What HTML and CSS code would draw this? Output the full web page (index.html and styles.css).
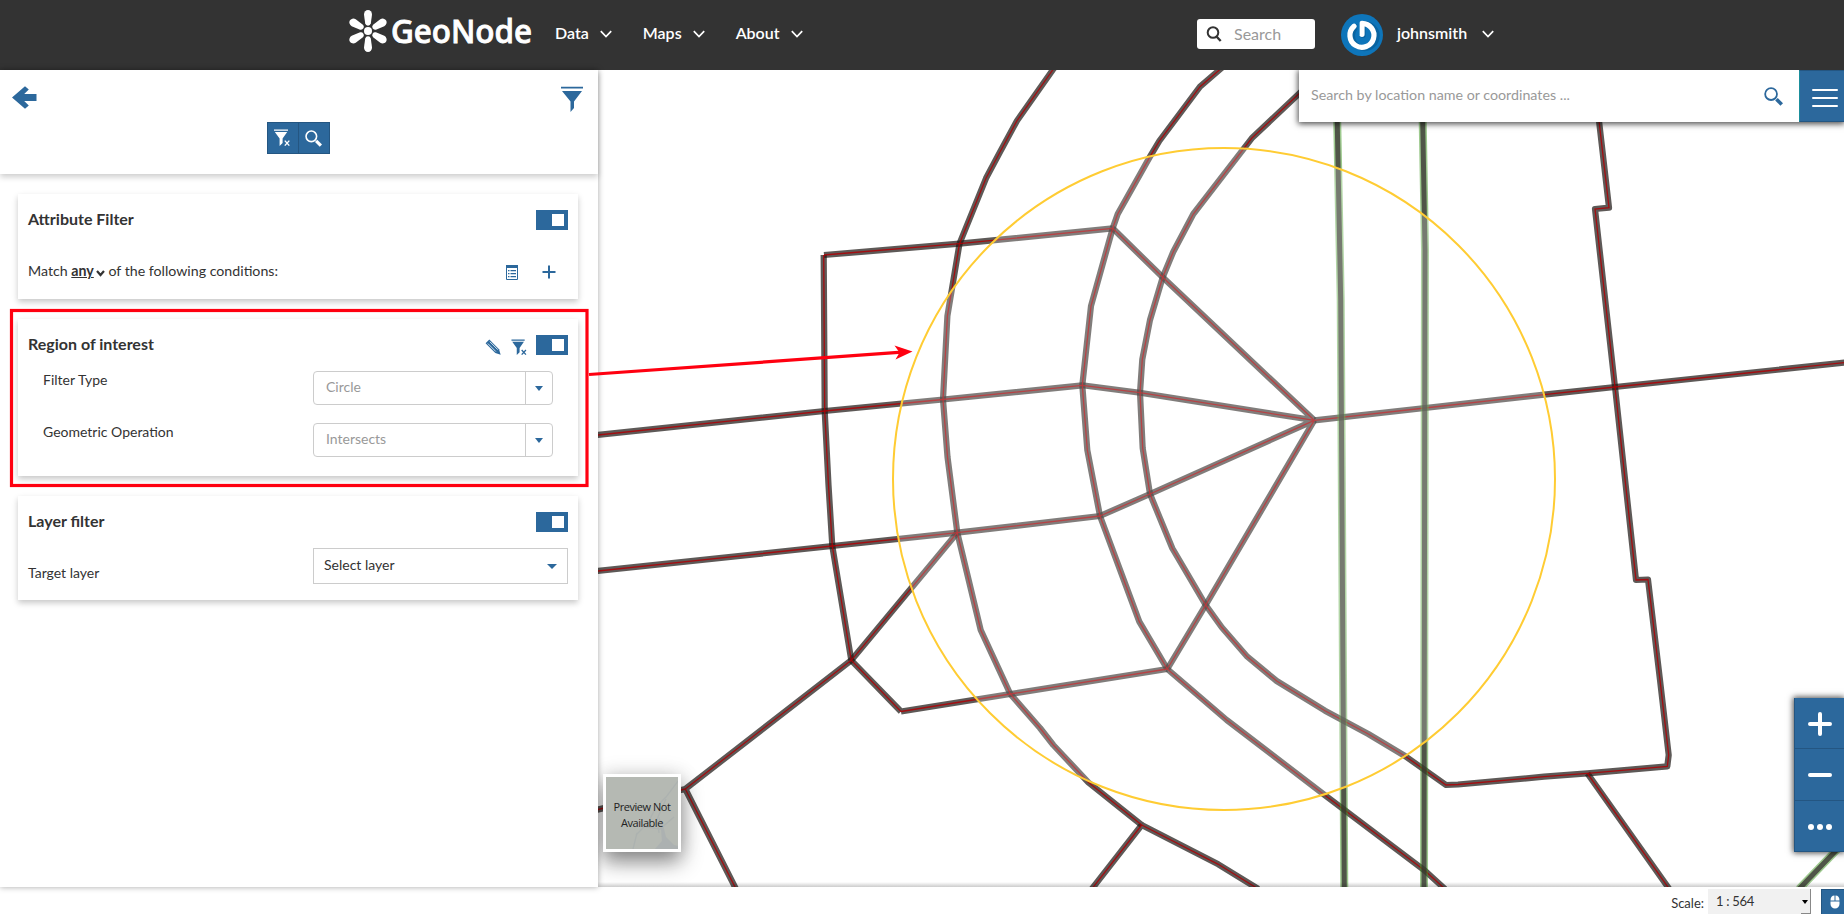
FILE: index.html
```html
<!DOCTYPE html>
<html lang="en">
<head>
<meta charset="utf-8">
<title>GeoNode</title>
<link rel="stylesheet" href="styles.css">
</head>
<body>
<svg class="defs" width="0" height="0">
  <symbol id="chev" viewBox="0 0 12 8"><path d="M.8 1.2 6 6.6l5.200-5.400" fill="none" stroke="currentColor" stroke-width="1.700"/></symbol>
  <symbol id="funnel" viewBox="0 0 22 26"><path d="M0 .8h22v1.800H0zM1 5h20L13 15.500V22l-3.500 4V15.500z" fill="currentColor"/></symbol>
  <symbol id="funnelx" viewBox="0 0 17 18"><path d="M0 .5h14v1.300H0zM.8 3h12.400L8.600 9.500V14L5.600 17V9.500z" fill="currentColor"/><path d="m10.800 11.600 4.500 5M15.300 11.600l-4.500 5" stroke="currentColor" stroke-width="1.400"/></symbol>
  <symbol id="glass" viewBox="0 0 18 18"><circle cx="6.700" cy="6.700" r="5.600" fill="none" stroke="currentColor" stroke-width="1.700"/><path d="m11.800 11.600 5 5" stroke="currentColor" stroke-width="3.400"/></symbol>
</svg>
<header class="topbar">
  <svg class="logo" width="190" height="56" viewBox="0 0 190 56">
    <g fill="#fff">
      <circle cx="20" cy="25" r="4"/>
      <g id="petals">
        <path id="petal" d="M16 8.500a4 4.500 0 0 1 8 0L22.800 17.500a2.900 2.900 0 0 1-5.600 0z"/>
        <use href="#petal" transform="rotate(60 20 25)"/><use href="#petal" transform="rotate(120 20 25)"/>
        <use href="#petal" transform="rotate(180 20 25)"/><use href="#petal" transform="rotate(240 20 25)"/>
        <use href="#petal" transform="rotate(300 20 25)"/>
      </g>
      <text class="logo-text" x="43" y="37" textLength="141" lengthAdjust="spacingAndGlyphs">GeoNode</text>
    </g>
  </svg>
  <nav class="nav">
    <a>Data<svg class="chev"><use href="#chev"/></svg></a>
    <a>Maps<svg class="chev"><use href="#chev"/></svg></a>
    <a>About<svg class="chev"><use href="#chev"/></svg></a>
  </nav>
  <div class="site-search">
    <svg width="16" height="16" viewBox="0 0 16 16" fill="none" stroke="#333"><circle cx="7" cy="6.500" r="5.300" stroke-width="2"/><path d="m10.500 10.500 4.200 4.500" stroke-width="2.400"/></svg>
    <span>Search</span>
  </div>
  <div class="user">
    <svg width="42" height="42" viewBox="0 0 42 42"><circle cx="21" cy="21" r="21" fill="#0e75ba"/><path d="M14.500 11.800A12.300 12.300 0 1 0 21 8.800v11.500" transform="translate(1 1)" fill="none" stroke="#07558c" stroke-opacity=".55" stroke-width="5.500" stroke-linecap="round"/><path d="M13 12.300A12 12 0 1 0 21 9.300v11" fill="none" stroke="#fff" stroke-width="5.200" stroke-linecap="round" stroke-linejoin="round"/><path d="M17.400 8v13" stroke="#0e75ba" stroke-width="2"/></svg>
    <span>johnsmith</span><svg class="chev"><use href="#chev"/></svg>
  </div>
</header>

<main class="main">
  <aside class="panel">
    <div class="panel-head">
      <div class="panel-icons">
        <svg width="25" height="23" viewBox="0 0 25 23"><path d="M24.500 8H12.200l4.600-4.400L13 .2 0 11.500l13 11.300 3.800-3.400-4.600-4.400h12.300z" fill="#2c689c"/></svg>
        <svg class="funnel" width="22" height="26"><use href="#funnel"/></svg>
      </div>
      <div class="btns">
        <button><svg width="17" height="18"><use href="#funnelx"/></svg></button>
        <button><svg width="17" height="17"><use href="#glass"/></svg></button>
      </div>
    </div>
    <section class="card attr">
      <div class="row"><h2>Attribute Filter</h2><i class="toggle"></i></div>
      <div class="row match"><span class="txt">Match <b>any</b><svg width="9" height="7" viewBox="0 0 9 7"><path d="m1 1 3.500 4L8 1" fill="none" stroke="#333" stroke-width="2.200"/></svg> of the following conditions:</span>
        <svg class="list" width="12" height="15" viewBox="0 0 12 15"><path d="M.5.500h11v14H.5z" fill="none" stroke="#2c689c"/><path d="M0 0h12v3H0zM2 5h1.500v1.200H2zM4.500 5H10v1.200H4.500zM2 8h1.500v1.200H2zM4.500 8H10v1.200H4.500zM2 11h1.500v1.200H2zM4.500 11H10v1.200H4.500z" fill="#2c689c"/></svg>
        <svg class="plus" width="14" height="14" viewBox="0 0 14 14"><path d="M7 .5v13M.5 7h13" stroke="#2c689c" stroke-width="2"/></svg></div>
    </section>
    <section class="card region">
      <div class="row"><h2>Region of interest</h2>
        <svg class="pencil" width="16" height="16" viewBox="0 0 16 16"><path d="M4.300.600 14 10.300l1.700 5.400-5.400-1.700L.6 4.300z" fill="#2c689c"/><path d="m2.800 4.500 8 8M4.800 2.700l8 8" stroke="#fff" stroke-width=".8"/></svg>
        <svg class="fx" width="17" height="17"><use href="#funnelx"/></svg>
        <i class="toggle"></i></div>
      <div class="field"><label>Filter Type</label><div class="select"><span>Circle</span><em><i class="caret"></i></em></div></div>
      <div class="field"><label>Geometric Operation</label><div class="select"><span>Intersects</span><em><i class="caret"></i></em></div></div>
    </section>
    <section class="card layer">
      <div class="row"><h2>Layer filter</h2><i class="toggle"></i></div>
      <div class="target"><label>Target layer</label><div class="dropdown"><span>Select layer</span><i class="caret big"></i></div></div>
    </section>
  </aside>

  <div class="map">
    <svg class="roads" viewBox="598 70 1246 817">
      <defs>
        <g id="segs">
          <path d="M824 255 959.500 243.700 1112.700 228.300"/>
          <path d="M823.700 255 824.700 411M824.700 411 828.500 485 832.300 546M832.300 546 851.300 660.300"/>
          <path d="M1058 63 1052.700 70 1017 120.700 1000 152 986 178.300 959.500 243.700"/>
          <path d="M959.500 243.700 947.400 316 943 399.500M943 399.500 947.500 457 957.300 532.700M957.300 532.700 980.700 630 1010.300 694M1010.300 694 1040 728 1053.300 745 1088.300 782.300 1141.700 825"/>
          <path d="M1141.700 825 1218.300 864.300 1258.300 889M1141.700 825 1091 890"/>
          <path d="M1225 65 1219.300 70 1200 86.700 1159.300 141 1150 156.700 1117.700 214 1112.700 228.300"/>
          <path d="M1112.700 228.300 1091 306 1082.300 385.300M1082.300 385.300 1087.300 450 1100 516M1100 516 1139.300 621.700 1167.300 669M1167.300 669 1226.700 720 1323.300 794 1425 870.700 1445 889"/>
          <path d="M1320 74 1300 92.700 1251.700 138.300 1193.300 214 1173.300 251.700 1162.700 277.300M1162.700 277.300 1150 320 1142.300 359.300 1140 392.700M1140 392.700 1142.700 448.300 1150 494M1150 494 1172.300 548.300 1205.700 605M1205.700 605 1221.700 627.300 1247.300 656.700 1276.700 681 1325 710.700 1368.300 734 1405 756 1446 785 1458 784.500 1544 776.700 1587.300 773.300 1667.300 766.300 1668.700 755 1660 680 1648 579.500 1636 580 1615 387"/>
          <path d="M1615 387 1595 209 1609 207.700 1598 112M1587.500 773.500 1670 890"/>
          <path d="M1112.700 228.300 1162.700 277.300 1314.300 420.300M1082.300 385.300 1140 392.700 1314.300 420.300M1100 516 1150 494 1314.300 420.300M1167.300 669 1205.700 605 1314.300 420.300"/>
          <path d="M1314.300 420.300 1425 408 1544 394.700 1615 387M1615 387 1846 362.500"/>
          <path d="M596 435.200 824.700 411M824.700 411 943 399.500M943 399.500 1082.300 385.300"/>
          <path d="M596 571.200 832.300 546M832.300 546 957.300 532.700M957.300 532.700 1100 516"/>
          <path d="M957.300 532.700 851.300 660.300M851.300 660.300 685.300 789M685.300 789 736 889M685.300 789 596 810"/>
          <path d="M851.300 660.300 901 711.500M901 711.500 1010.300 694M1010.300 694 1167.300 669"/>
        </g>
        <path id="g1" d="M1337 110 1340.700 300 1341.800 480 1344.300 889"/>
        <path id="g2" d="M1422.500 110 1425 250 1424.600 480 1424 889"/>
        <path id="g3" d="M1799 889 1837 849.500 1846 841"/>
      </defs>
      <use href="#segs" class="casing"/>
      <use href="#segs" class="red"/>
      <g class="green"><use href="#g1"/><use href="#g2"/><use href="#g3"/></g>
      <g class="green-core"><use href="#g1"/><use href="#g2"/><use href="#g3"/></g>
      <circle class="roi" cx="1224" cy="479" r="331"/>
    </svg>
    <div class="loc-search"><span>Search by location name or coordinates ...</span><svg width="19" height="19"><use href="#glass"/></svg><b class="burger"><i></i><i></i><i></i></b></div>
    <div class="preview"><svg viewBox="0 0 72 72"><path d="M72 4 60 20 50 30 42 46 30 58M60 22l-9 20 2 14M27 72l4-16M40 50l14 2 14-12" fill="none" stroke="#a5acae" stroke-width="1.200"/><path d="M52 38 57 48 60 60 68 68 72 69V72H49L56 64 55 52z" fill="#a4abb0"/></svg><span>Preview Not<br>Available</span></div>
    <div class="zoomer">
      <div><svg width="26" height="26" viewBox="0 0 26 26"><path d="M13 3v20M3 13h20" class="zs"/></svg></div>
      <div><svg width="26" height="26" viewBox="0 0 26 26"><path d="M3 13h20" class="zs"/></svg></div>
      <div><svg width="26" height="26" viewBox="0 0 26 26" fill="#fff"><circle cx="4" cy="13" r="3"/><circle cx="13" cy="13" r="3"/><circle cx="22" cy="13" r="3"/></svg></div>
    </div>
  </div>
</main>

<footer class="footer">
  <span>Scale:</span>
  <div class="scale"><span>1 : 564</span><i></i></div>
  <div class="mouse"><svg width="10" height="14" viewBox="0 0 10 14"><path d="M.500 5.500C.500 2 2 .500 4.500.500v5zM5.500.500C8 .500 9.500 2 9.500 5.500h-4zM.500 6.500h9V9a4.500 4.500 0 0 1-9 0z" fill="#fff"/></svg></div>
</footer>

<svg class="callout" width="1844" height="914">
  <rect x="11.500" y="310.500" width="575.500" height="175" fill="none" stroke="#ff0010" stroke-width="3.200"/>
  <path d="M589 374.500 902 352.200" stroke="#ff0010" stroke-width="3.200"/>
  <path d="M912.500 351.500 894.500 345.500 899.500 352.400 895.500 359.500z" fill="#ff0010"/>
</svg>
</body>
</html>
```

FILE: styles.css
```css
* { box-sizing: border-box; }
body { margin: 0; width: 1844px; height: 914px; overflow: hidden; display: flex; flex-direction: column; font-family: Lato, "Liberation Sans", sans-serif; font-size: 14px; color: #333; background: #fff; position: relative; }
svg { display: block; flex: none; }
.defs { position: absolute; }

.topbar { height: 70px; flex: none; background: #333; color: #fff; display: flex; align-items: flex-start; padding-left: 348px; font-size: 16px; font-weight: 600; }
.logo { margin-top: 6px; }
.logo-text { font-family: "Noto Sans", "Open Sans", sans-serif; font-weight: 500; font-size: 32px; stroke: #fff; stroke-width: .9px; }
.nav { display: flex; margin: 23px 0 0 17px; width: 642px; }
.nav a { display: flex; line-height: 20px; margin-right: 31px; }
.chev { width: 12px; height: 8px; margin: 7px 0 0 11px; }
.site-search { width: 118px; height: 30px; margin-top: 19px; border-radius: 3px; background: #fff; color: #999; font-weight: 400; display: flex; align-items: center; padding-left: 9px; gap: 12px; }
.site-search span { padding-bottom: 2px; }
.user { display: flex; margin: 14px 0 0 26px; }
.user span { line-height: 20px; margin: 9px 0 0 14px; }
.user .chev { margin: 16px 0 0 15px; }

.main { display: flex; height: 817px; flex: none; }
.panel { width: 598px; flex: none; background: #fff; box-shadow: 0 0 6px rgba(0,0,0,.35); position: relative; z-index: 1; color: #333; }
.panel-head { height: 104px; box-shadow: 0 3px 6px rgba(0,0,0,.2); padding: 16px 15px 0 12px; }
.panel-icons { display: flex; justify-content: space-between; height: 36px; color: #2c689c; }
.btns { display: flex; justify-content: center; padding-left: 2px; }
button { width: 31.500px; height: 32px; border: 1px solid #245682; background: #2c689c; color: #fff; padding: 0; display: flex; align-items: center; justify-content: center; }
button + button { border-left: 0; }
.card { margin: 20px 20px 0 18px; padding: 16px 10px 0; box-shadow: 0 3px 6px rgba(0,0,0,.22); }
.attr { height: 105px; }
.region { height: 157px; }
.layer { height: 104px; }
.row { display: flex; height: 20px; align-items: center; }
h2 { font-size: 16px; font-weight: 700; margin: 0 auto 0 0; line-height: 20px; padding-bottom: 2px; }
.toggle { width: 32px; height: 20px; background: #2c689c; display: block; padding: 4px 4px 4px 16px; }
.toggle::before { content: ""; display: block; width: 12px; height: 12px; background: #fff; }
.match { margin-top: 31px; padding-right: 12px; }
.txt { display: flex; margin-right: auto; white-space: pre; line-height: 20px; font-size: 14.200px; }
.txt b { text-decoration: underline; }
.txt svg { margin: 9px 0 0 2px; }
.list { margin-right: 24px; position: relative; top: 1px; }
.plus { position: relative; top: 1px; }
.pencil { margin-right: 10px; position: relative; top: 2px; }
.fx { margin-right: 8px; position: relative; top: 2px; color: #2c689c; }
.field { display: flex; justify-content: space-between; height: 52px; padding: 0 15px; }
.region .row { margin-bottom: 16px; }
.field label { line-height: 20px; margin-top: -1px; }
.select { width: 240px; height: 34px; border: 1px solid #ccc; border-radius: 4px; display: flex; color: #999; line-height: 30px; padding-left: 12px; justify-content: space-between; }
.select em { width: 27px; border-left: 1px solid #ccc; display: flex; align-items: center; justify-content: center; }
.caret { border: 4px solid transparent; border-top: 5px solid #2c689c; border-bottom: 0; height: 0; }
.caret.big { border-width: 5px 5px 0; }
.target { display: flex; justify-content: space-between; margin-top: 16px; }
.target label { line-height: 20px; margin-top: 15px; }
.dropdown { width: 255px; height: 36px; border: 1px solid #ccc; display: flex; align-items: center; justify-content: space-between; padding: 0 10px; }
.dropdown span { padding-bottom: 3px; }

.map { flex: 1; position: relative; overflow: hidden; }
.map::after { content: ""; position: absolute; left: 0; right: 0; bottom: 0; height: 5px; background: linear-gradient(rgba(0,0,0,0), rgba(0,0,0,.2)); }
.roads { width: 1246px; height: 817px; fill: none; }
.casing { stroke: rgba(30,25,22,.72); stroke-width: 6.200; stroke-linejoin: round; }
.red { stroke: rgba(175,0,5,.85); stroke-width: 1.300; }
.green { stroke: rgba(60,150,30,.5); stroke-width: 8; }
.green-core { stroke: rgba(55,45,48,.75); stroke-width: 5; }
.roi { fill: rgba(255,255,255,.22); stroke: #ffcc33; stroke-width: 2; }
.loc-search { position: absolute; left: 701px; top: 0; width: 545px; height: 52px; background: #fff; box-shadow: 0 1px 6px 1px rgba(0,0,0,.7); display: flex; align-items: center; padding-left: 12px; color: #999; font-size: 14.250px; }
.loc-search span { flex: 1; padding-bottom: 3px; }
.loc-search svg { color: #2c689c; margin-right: 16px; }
.burger { width: 45px; height: 52px; background: #2c689c; border: 1px solid #245682; border-left-color: #1b8f9c; border-right: 0; padding: 18px 6px 0 12px; }
.burger i { display: block; height: 2px; background: #fff; margin-bottom: 6px; border-radius: 1px; }
.preview { position: absolute; left: 5px; top: 704px; width: 78px; height: 78px; border: 3px solid #fff; background: #b5b9b3; box-shadow: 0 10px 20px rgba(0,0,0,.45), 0 0 20px rgba(0,0,0,.12); }
.preview svg { width: 72px; height: 72px; opacity: .5; }
.preview span { position: absolute; inset: 22px 0 0; text-align: center; white-space: nowrap; font: 11px/15.500px "Open Sans", sans-serif; letter-spacing: -.45px; color: #222; }
.zoomer { position: absolute; right: 0; top: 628px; width: 50px; height: 154px; background: #2c689c; box-shadow: 0 0 6px 1px rgba(0,0,0,.7); }
.zoomer div { height: 51.300px; border: 1px solid #245682; border-width: 0 0 1px 1px; display: flex; align-items: center; justify-content: center; padding: 2px 0 0 1px; }
.zs { stroke: #fff; stroke-width: 4; stroke-linecap: round; fill: none; }

.footer { height: 27px; flex: none; background: #fff; display: flex; justify-content: flex-end; padding-top: 2px; font-size: 13px; }
.footer > span { line-height: 29px; margin-right: 4px; }
.scale { width: 103px; background: #f1f1f1; display: flex; justify-content: space-between; line-height: 25px; padding-left: 8px; margin-right: 10px; letter-spacing: -.3px; }
.scale i { width: 10px; border-right: 1px solid #888; border-bottom: 1px solid #888; position: relative; }
.scale i::before { content: ""; position: absolute; left: 1px; top: 11px; border: 4px solid transparent; border-width: 4px 3.500px 0; border-top-color: #000; }
.mouse { width: 23px; background: #2c689c; border: 1px solid #245682; border-width: 1px 0 0 1px; padding: 5px 0 0 8px; }
.callout { position: absolute; left: 0; top: 0; z-index: 5; pointer-events: none; }
```
